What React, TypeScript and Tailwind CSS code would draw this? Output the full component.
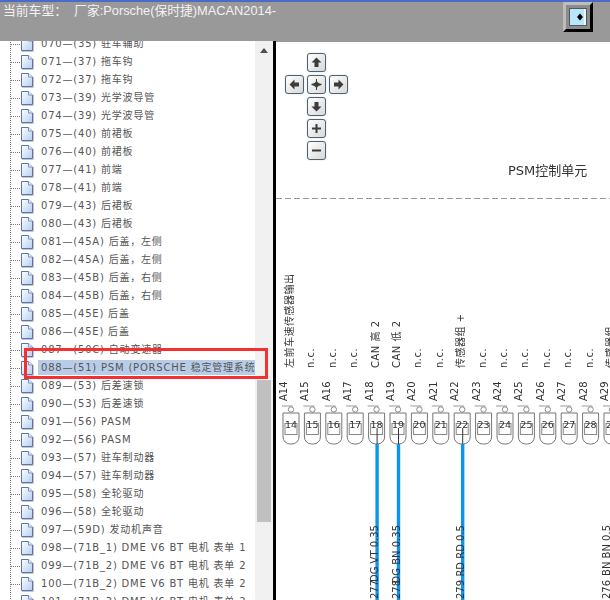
const rows = [
  "070—(35) 驻车辅助",
  "071—(37) 拖车钩",
  "072—(37) 拖车钩",
  "073—(39) 光学波导管",
  "074—(39) 光学波导管",
  "075—(40) 前裙板",
  "076—(40) 前裙板",
  "077—(41) 前端",
  "078—(41) 前端",
  "079—(43) 后裙板",
  "080—(43) 后裙板",
  "081—(45A) 后盖，左侧",
  "082—(45A) 后盖，左侧",
  "083—(45B) 后盖，右侧",
  "084—(45B) 后盖，右侧",
  "085—(45E) 后盖",
  "086—(45E) 后盖",
  "087—(50C) 自动变速器",
  "088—(51) PSM (PORSCHE 稳定管理系统)",
  "089—(53) 后差速锁",
  "090—(53) 后差速锁",
  "091—(56) PASM",
  "092—(56) PASM",
  "093—(57) 驻车制动器",
  "094—(57) 驻车制动器",
  "095—(58) 全轮驱动",
  "096—(58) 全轮驱动",
  "097—(59D) 发动机声音",
  "098—(71B_1) DME V6 BT 电机 表单 1",
  "099—(71B_2) DME V6 BT 电机 表单 2",
  "100—(71B_2) DME V6 BT 电机 表单 2",
  "101—(71B_3) DME V6 BT 电机 表单 2",
];

const pinLabels: Record<number, string> = {
  14: "左前车速传感器输出",
  18: "CAN 高 2",
  19: "CAN 低 2",
  22: "传感器组 +",
  29: "传感器组",
};

const wires = [
  { pin: 18, num: "277", text: "DG VT 0.35" },
  { pin: 19, num: "278", text: "DG BN 0.35" },
  { pin: 22, num: "279", text: "RD RD 0.5" },
];

const pins = Array.from({ length: 16 }, (_, i) => i + 14);
const pinX = (pin: number) => 291 + (pin - 14) * 21.4;

const PageIcon = () => (
  <svg width="14" height="16" viewBox="0 0 14 16" className="shrink-0">
    <defs>
      <linearGradient id="pageFill" x1="0" y1="0" x2="1" y2="1">
        <stop offset="0" stopColor="#ffffff" />
        <stop offset="1" stopColor="#b4cef2" />
      </linearGradient>
    </defs>
    <path d="M2 15.5H13.5V5" fill="none" stroke="#c4c4cc" />
    <path d="M1.5 1.5H8.5L12.5 5V14.5H1.5Z" fill="url(#pageFill)" stroke="#5f72ad" />
    <path d="M8.5 1.5V5H12.5" fill="#eef4fd" stroke="#7f90c0" />
  </svg>
);

const NavButton = ({ d }: { d: string }) => (
  <button className="flex h-[19px] w-[19px] items-center justify-center rounded-[3px] border border-[#50606c] bg-gradient-to-br from-white to-[#d8d8d8] shadow-[0_0_1px_#5a9ad0]">
    <svg width="13" height="13" viewBox="0 0 13 13">
      <path d={d} fill="#3c3c3c" />
    </svg>
  </button>
);

const Diagram = () => (
  <svg viewBox="276 41 334 559" className="block h-full w-full blur-[0.4px]" fontFamily="'DejaVu Sans', 'Noto Sans CJK SC', sans-serif">
    <text x="508" y="175" fontSize="13" fill="#333">PSM控制单元</text>
    <line x1="276" y1="198.5" x2="610" y2="198.5" stroke="#999" strokeDasharray="6 3" />

    {pins.map((pin) => {
      const x = pinX(pin);
      return (
        <g key={pin}>
          <text x={x + 2} y="368" fontSize="10" letterSpacing="0.5" fill="#333" transform={`rotate(-90 ${x + 2} 368)`}>
            {pinLabels[pin] ?? "n.c."}
          </text>
          <text x={x - 4} y="401" fontSize="10" fill="#333" transform={`rotate(-90 ${x - 4} 401)`}>
            {`A${pin}`}
          </text>
          <line x1={x - 9} y1="406" x2={x + 2} y2="406" stroke="#999" />
          <circle cx={x} cy="409.5" r="2.7" fill="#fff" stroke="#888" />
          <path
            d={`M${x - 8} 413H${x + 8}V437a7 7 0 0 1 -7 7H${x - 1}a7 7 0 0 1 -7 -7Z`}
            fill="#fff"
            stroke="#777"
          />
          <rect x={x - 6} y="423.5" width="12" height="11" fill="#fff" stroke="#888" />
          <text x={x} y="428" fontSize="9.5" fill="#333" textAnchor="middle">
            {pin}
          </text>
        </g>
      );
    })}

    {wires.map(({ pin, num, text }) => {
      const x = pinX(pin) + 0.5;
      return (
        <g key={pin}>
          <line x1={x} y1="428" x2={x} y2="444" stroke="#333" />
          <line x1={x} y1="444" x2={x} y2="600" stroke="#0a96f0" strokeWidth="3.4" />
          <text x={x + 1} y="525" fontSize="10" fill="#333" textAnchor="end" transform={`rotate(-90 ${x + 1} 525)`}>
            {text}
          </text>
          <text x={x + 1} y="599" fontSize="10" fill="#333" transform={`rotate(-90 ${x + 1} 599)`}>
            {num}
          </text>
        </g>
      );
    })}

    <text x="610" y="599" fontSize="10" fill="#333" transform="rotate(-90 610 599)">276</text>
    <text x="610" y="525" fontSize="10" fill="#333" textAnchor="end" transform="rotate(-90 610 525)">BN BN 0.5</text>
  </svg>
);

export default function App() {
  return (
    <div className="relative flex h-[600px] w-[610px] flex-col overflow-hidden bg-white font-['Liberation_Sans','Noto_Sans_CJK_SC',sans-serif]">
      {/* top bar */}
      <div className="z-10 flex h-[41px] shrink-0 items-start justify-between border-t-2 border-[#4a6cc8] bg-[#999999] pl-[3px] pr-[17px]">
        <span className="whitespace-pre text-[12.8px] leading-[18px] text-[#f2f2f2]">当前车型：  厂家:Porsche(保时捷)MACAN2014-</span>
        <div className="flex h-[30px] w-[30px] items-center justify-center border-[3px] border-b-black border-l-[#bdbdbd] border-r-black border-t-[#bdbdbd] bg-[#8c8c8c]">
          <div className="h-[18px] w-[18px] border border-[#55595c] bg-[#b8e6fc]">
            <svg width="16" height="16" viewBox="0 0 16 16" className="block">
              <path d="M7 8L10 4.5L13 8L10 11.5Z" fill="#000" />
              <path d="M15 0V16" stroke="#fff" strokeWidth="1.4" />
            </svg>
          </div>
        </div>
      </div>

      <div className="flex min-h-0 flex-1">
        {/* tree list */}
        <div className="w-[255px] shrink-0 overflow-hidden">
          <div className="ml-[10px] mt-[-6px] border-l border-dotted border-[#777] font-['DejaVu_Sans','Noto_Sans_CJK_SC',sans-serif] text-[10px] tracking-[0.8px] text-[#555]">
            {rows.map((row) => {
              const selected = row.startsWith("088");
              return (
                <div key={row} className="flex h-[18px] items-center">
                  <div className="w-[9px] shrink-0 border-t border-dotted border-[#777]" />
                  <PageIcon />
                  <span className={`mb-[2px] ml-[4px] h-[15px] flex-1 overflow-hidden whitespace-nowrap pl-[3px] leading-[15px] ${selected ? "bg-[#b8cce8]" : ""}`}>
                    {row}
                  </span>
                </div>
              );
            })}
          </div>
        </div>

        {/* scrollbar */}
        <div className="relative w-[18px] shrink-0 bg-[#f1f1f1]">
          <div className="mx-auto mt-[7px] h-0 w-0 border-x-4 border-b-[5px] border-x-transparent border-b-[#505050]" />
          <div className="absolute left-[2px] top-[339px] h-[142px] w-[14px] bg-[#c0c0c0]" />
        </div>

        <div className="w-[3px] shrink-0 bg-black" />

        {/* diagram */}
        <div className="relative min-w-0 flex-1 shadow-[inset_0_1px_0_#999]">
          <Diagram />
          <div className="absolute left-[9px] top-[12px] grid grid-cols-[19px_19px_19px] gap-[3px]">
            <div />
            <NavButton d="M6.5 1.5L11.5 6.5H8.5V11H4.5V6.5H1.5Z" />
            <div />
            <NavButton d="M1.5 6.5L6.5 1.5V4.5H11V8.5H6.5V11.5Z" />
            <NavButton d="M6 1H7V3.5L8.5 5L11.5 6V7L8.5 8L7 9.5V12H6V9.5L4.5 8L1.5 7V6L4.5 5L6 3.5Z" />
            <NavButton d="M11.5 6.5L6.5 1.5V4.5H2V8.5H6.5V11.5Z" />
            <div />
            <NavButton d="M6.5 11.5L11.5 6.5H8.5V2H4.5V6.5H1.5Z" />
            <div />
            <div />
            <NavButton d="M5.5 2H7.5V5.5H11V7.5H7.5V11H5.5V7.5H2V5.5H5.5Z" />
            <div />
            <div />
            <NavButton d="M2 5.5H11V7.5H2Z" />
            <div />
          </div>
        </div>
      </div>

      {/* red callout over the selected row */}
      <div className="absolute left-[24px] top-[348px] h-[31px] w-[244px] border-[3px] border-[#f43030]" />
    </div>
  );
}
